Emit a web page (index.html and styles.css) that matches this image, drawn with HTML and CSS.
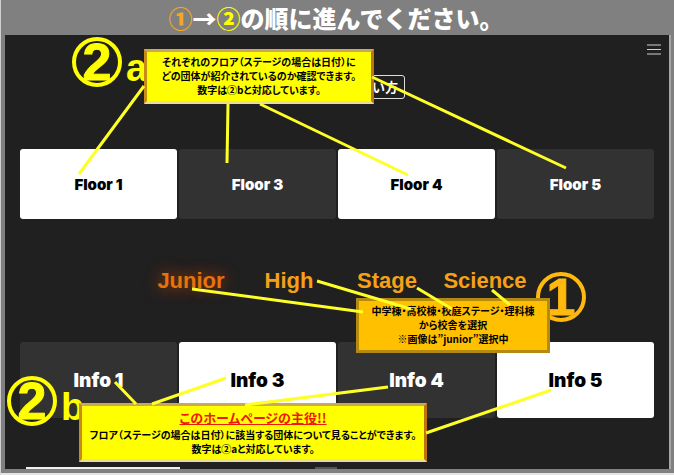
FILE: index.html
```html
<!DOCTYPE html>
<html lang="ja">
<head>
<meta charset="utf-8">
<meta name="viewport" content="width=device-width, initial-scale=1">
<title>使い方</title>
<link rel="stylesheet" href="styles.css">
</head>
<body>
<div class="guide">
  <h1 class="guide-title"><span class="orange">①</span>→<span class="yellow">②</span>の順に進んでください。</h1>
  <main class="screen">
    <div class="topbar">
      <button class="menu" type="button"><svg viewBox="0 0 14 11" width="14" height="11"><path d="M0 1H14M0 5.5H14M0 10H14"/></svg></button>
    </div>
    <div class="usage-row"><button class="usage" type="button">い方</button></div>
    <div class="cards floors">
      <a class="card light" href="#">Floor 1</a>
      <a class="card" href="#">Floor 3</a>
      <a class="card light" href="#">Floor 4</a>
      <a class="card" href="#">Floor 5</a>
    </div>
    <nav class="tabs">
      <a class="tab active" href="#">Junior</a>
      <a class="tab" href="#">High</a>
      <a class="tab" href="#">Stage</a>
      <a class="tab" href="#">Science</a>
    </nav>
    <div class="cards infos">
      <a class="card" href="#">Info 1</a>
      <a class="card light" href="#">Info 3</a>
      <a class="card" href="#">Info 4</a>
      <a class="card light" href="#">Info 5</a>
    </div>
    <div class="next-row"><span class="next-light"></span><span class="next-dark"></span></div>
  </main>

  <div class="mark mark-2a"><span class="ring">2</span><span class="letter">a</span></div>
  <div class="mark mark-1"><span class="ring">1</span></div>
  <div class="mark mark-2b"><span class="ring">2</span><span class="letter">b</span></div>

  <div class="note note-a">
    <p>それぞれのフロア（ステージの場合は日付）に</p>
    <p>どの団体が紹介されているのか確認できます。</p>
    <p>数字は②bと対応しています。</p>
  </div>
  <div class="note note-1">
    <p>中学棟・高校棟・校庭ステージ・理科棟</p>
    <p>から校舎を選択</p>
    <p>※画像は”junior”選択中</p>
  </div>
  <div class="note note-b">
    <h2>このホームページの主役!!</h2>
    <p>フロア（ステージの場合は日付）に該当する団体について見ることができます。</p>
    <p>数字は②aと対応しています。</p>
  </div>

  <svg class="pointers" viewBox="0 0 674 475" preserveAspectRatio="none">
    <path d="M144 86L79 174M228 104L227 163M260 104L408 175M372 77L566 168"/>
    <path d="M192 289L363 312M317 281L411 309M417 288L452 309M492 290L510 305"/>
    <path d="M115 382L136 404M152 404L226 378M245 405L388 387M426 433L551 390"/>
  </svg>
</div>
</body>
</html>
```
FILE: styles.css
```css
* {
  box-sizing: border-box;
}

body {
  margin: 0;
  background: #808080;
  font-family: "Liberation Sans", "Noto Sans CJK JP", sans-serif;
}

h1, h2, p {
  margin: 0;
}

a {
  color: inherit;
  text-decoration: none;
}

button {
  padding: 0;
  background: none;
  font-family: inherit;
}

.guide {
  position: relative;
  display: flex;
  flex-direction: column;
  min-height: 100vh;
  padding: 0 3px 4px 4px;
  border-left: 1px solid #d0d0d0;
  border-bottom: 2px solid #e4e4e4;
}

.guide-title {
  height: 35px;
  padding-right: 4px;
  color: #fff;
  font: 900 24px/36px "Noto Sans CJK JP", sans-serif;
  text-align: center;
}

.orange {
  color: #f5a81c;
}

.yellow {
  color: #ff0;
}

.screen {
  flex: 1;
  display: flex;
  flex-direction: column;
  padding: 0 15px;
  background: #202020;
  border-right: 2px solid #a6a6a6;
}

.topbar {
  display: flex;
  justify-content: flex-end;
  height: 40px;
  padding: 9px 0 0;
  margin-right: -7px;
}

.menu {
  width: 14px;
  height: 11px;
  border: 0;
}

.menu svg {
  display: block;
  stroke: #d0d0d0;
  stroke-width: 1;
}

.usage-row {
  display: flex;
  justify-content: center;
}

.usage {
  width: 136px;
  height: 24px;
  padding-right: 6px;
  border: 1px solid #ddd;
  border-radius: 3px;
  color: #fff;
  font: 700 13px/20px "Noto Sans CJK JP", sans-serif;
  text-align: right;
}

.cards {
  display: grid;
  grid-template-columns: repeat(4, 1fr);
  gap: 2px;
}

.card {
  display: flex;
  align-items: center;
  justify-content: center;
  border-radius: 3px;
  background: #323232;
  color: #fff;
  font-family: Inter, sans-serif;
  font-weight: 900;
}

.card.light {
  background: #fff;
  color: #000;
}

.floors {
  margin-top: 50px;
}

.floors .card {
  height: 70px;
  font-size: 15px;
}

.tabs {
  display: grid;
  grid-template-columns: repeat(4, 98px);
  justify-content: center;
  padding-left: 2px;
  margin-top: 48px;
  font-size: 22px;
  font-weight: 700;
  line-height: 28px;
  text-align: center;
  color: #f5a017;
}

.active {
  color: #e8730c;
  text-shadow: 0 0 16px #c04808;
}

.infos {
  margin-top: 47px;
}

.infos .card {
  height: 76px;
  font-size: 19px;
}

.next-row {
  display: flex;
  justify-content: space-between;
  width: 50%;
  margin-top: auto;
  padding-left: 6px;
}

.next-light,
.next-dark {
  width: 154px;
  height: 2px;
  background: #f0f0f0;
}

.next-dark {
  width: 22px;
  background: #555;
}

.mark {
  position: absolute;
  display: flex;
  color: #ff0;
  font-weight: 700;
}

.ring {
  display: flex;
  align-items: center;
  justify-content: center;
  width: 50px;
  height: 50px;
  border: 4px solid;
  border-radius: 50%;
  font-size: 52px;
  line-height: 42px;
  -webkit-text-stroke: 1px currentColor;
}

.letter {
  padding: 9px 0 0 4px;
  font-size: 38px;
  line-height: 44px;
}

.mark-2a {
  top: 37px;
  left: 71px;
}

.mark-1 {
  top: 272px;
  left: 535px;
  color: #ffb90f;
}

.mark-2b {
  top: 376px;
  left: 6px;
}

.note {
  position: absolute;
  border: 3px solid;
  border-color: #c9a85a #bd7410 #eadc9a #c98a18;
  background: #ff0;
  color: #000;
  font: 700 10px/14px "Noto Sans CJK JP", sans-serif;
  font-feature-settings: "palt";
  text-align: center;
  white-space: nowrap;
}

.note-a {
  top: 49px;
  left: 143px;
  width: 230px;
  padding: 3px 0 4px;
}

.note-1 {
  top: 298px;
  left: 355px;
  width: 194px;
  padding: 3px 0 4px;
  border-color: #b58a10;
  background: #ffc000;
}

.note-b {
  top: 403px;
  left: 78px;
  width: 348px;
  padding: 2px 0 3px;
}

.note h2 {
  color: #f01800;
  font-size: 13px;
  line-height: 20px;
  text-decoration: underline;
}

.pointers {
  position: absolute;
  top: 0;
  left: -1px;
  width: calc(100% + 1px);
  height: calc(100% + 2px);
  fill: none;
  stroke: #ffff28;
  stroke-width: 3;
  pointer-events: none;
}
```
